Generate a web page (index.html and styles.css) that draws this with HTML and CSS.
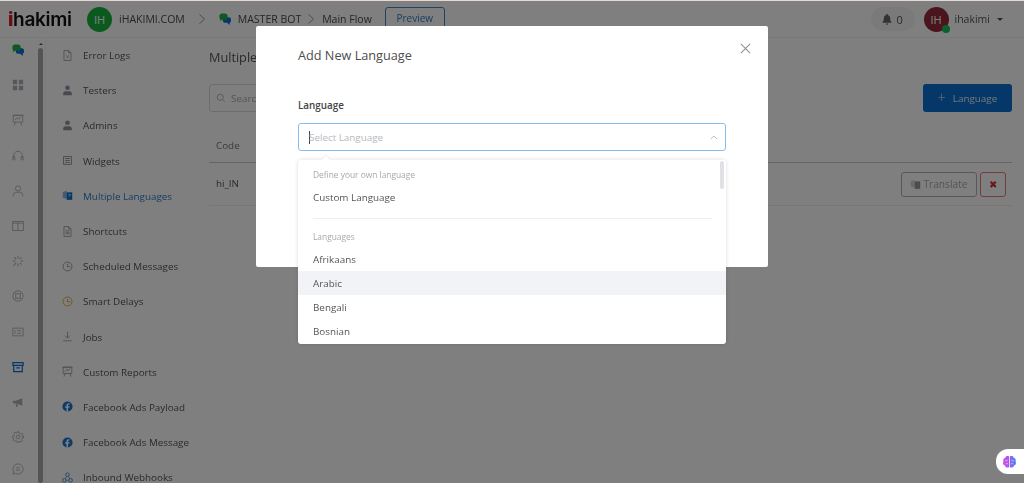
FILE: index.html
```html
<!DOCTYPE html>
<html lang="en">
<head>
<meta charset="utf-8">
<title>Add New Language</title>
<link rel="stylesheet" href="styles.css">
</head>
<body>
<svg class="defs" width="0" height="0" aria-hidden="true">
  <symbol id="bubbles" viewBox="0 0 14 14">
    <path d="M6 5h5.500A2.500 2.500 0 0 1 14 7.500v1.500a2.500 2.500 0 0 1-1.500 2.300V14l-3-2.500H7A2.500 2.500 0 0 1 4.500 9V6.500z" fill="#0b6fd0"/>
    <path d="M3.500 0.500h3.500a3 3 0 0 1 3 3v1.500a3 3 0 0 1-3 3H3.500L1.500 9.500V7.500A3 3 0 0 1 0.500 5V3.500a3 3 0 0 1 3-3z" fill="#1fb04c"/>
  </symbol>
  <symbol id="present" viewBox="0 0 14 14">
    <path d="M1.500 1.500h11v8h-11zM0.500 1.500h13M4 9.500l-1.500 4M10 9.500l1.500 4M3.500 7l2.500-2.500 1.500 1.500L10.500 3.500" fill="none" stroke="currentColor" stroke-width="1"/>
  </symbol>
  <symbol id="person" viewBox="0 0 14 14">
    <circle cx="7" cy="3.500" r="3" fill="currentColor"/>
    <path d="M1.500 13v-2.500A3 3 0 0 1 4.500 7.800h5a3 3 0 0 1 3 2.700V13z" fill="currentColor"/>
  </symbol>
  <symbol id="clock" viewBox="0 0 14 14">
    <circle cx="7" cy="7" r="5.700" fill="none" stroke="currentColor" stroke-width="1.100"/>
    <path d="M7 3.500V7.300h3.200" fill="none" stroke="currentColor" stroke-width="1.100"/>
  </symbol>
  <symbol id="fb" viewBox="0 0 14 14">
    <circle cx="7" cy="7" r="6.500" fill="#1877d2"/>
    <path d="M7.700 13.400V8.700h1.600l.3-1.900H7.700V5.600c0-.6.300-1 1-1h1V3a8 8 0 0 0-1.400-.1c-1.600 0-2.600 1-2.600 2.600v1.300H4v1.900h1.700v4.700z" fill="#fff"/>
  </symbol>
</svg>

<div class="page">
  <header class="topbar">
    <div class="logo"><span class="logo-i">i</span>hakimi</div>
    <span class="avatar avatar-green">IH</span>
    <span class="crumb">iHAKIMI.COM</span>
    <svg class="chev" viewBox="0 0 8 12"><path d="M1.500 1.500 6.500 6l-5 4.500" fill="none" stroke="currentColor" stroke-width="1"/></svg>
    <svg class="bubble-icon" viewBox="0 0 14 14"><use href="#bubbles"/></svg>
    <span class="crumb">MASTER BOT</span>
    <svg class="chev chev-near" viewBox="0 0 8 12"><path d="M1.500 1.500 6.500 6l-5 4.500" fill="none" stroke="currentColor" stroke-width="1"/></svg>
    <span class="crumb">Main Flow</span>
    <span class="preview">Preview</span>
    <span class="spacer"></span>
    <span class="notify">
      <svg viewBox="0 0 12 14"><path d="M6 0.800a1 1 0 0 1 1 1v.4a3.800 3.800 0 0 1 2.800 3.700c0 3 .7 3.900 1.500 4.800v.8H.7v-.8c.8-.9 1.500-1.800 1.500-4.800A3.800 3.800 0 0 1 5 2.200v-.4a1 1 0 0 1 1-1zM4.500 12.300h3a1.500 1.500 0 0 1-3 0z" fill="currentColor"/></svg>
      0
    </span>
    <span class="avatar avatar-red">IH<i class="online"></i></span>
    <span class="user">ihakimi</span>
    <span class="caret"></span>
  </header>

  <div class="workspace">
    <nav class="rail">
      <svg class="rail-icon" viewBox="0 0 14 14"><use href="#bubbles"/></svg>
      <svg class="rail-icon" viewBox="0 0 14 14"><path d="M1 1h5v5H1zM8 1h5v5H8zM1 8h5v5H1zM8 8h5v5H8z" fill="currentColor"/></svg>
      <svg class="rail-icon" viewBox="0 0 14 14"><use href="#present"/></svg>
      <svg class="rail-icon" viewBox="0 0 14 14"><path d="M2 9V6.500a5 5 0 0 1 10 0V9M1 7.500h2.200v4H1zM10.800 7.500H13v4h-2.200z" fill="none" stroke="currentColor"/></svg>
      <svg class="rail-icon" viewBox="0 0 14 14"><circle cx="7" cy="4" r="3" fill="none" stroke="currentColor"/><path d="M1.500 13.500v-1.500a3.500 3.500 0 0 1 3.500-3.500h4a3.500 3.500 0 0 1 3.500 3.500v1.500" fill="none" stroke="currentColor"/></svg>
      <svg class="rail-icon" viewBox="0 0 14 14"><path d="M.7 1.700h12.600v10.600H.7zM7 1.700v10.600M.7 3.700h12.600" fill="none" stroke="currentColor"/></svg>
      <svg class="rail-icon" viewBox="0 0 14 14"><path d="M7 1v3M7 10v3M1 7h3M10 7h3M2.800 2.800l2 2M9.200 9.200l2 2M11.200 2.800l-2 2M4.800 9.200l-3 3.300" fill="none" stroke="currentColor" stroke-width="1.200"/></svg>
      <svg class="rail-icon" viewBox="0 0 14 14"><circle cx="7" cy="7" r="6" fill="none" stroke="currentColor"/><circle cx="7" cy="7" r="3" fill="none" stroke="currentColor"/><path d="M2.800 2.800l2 2M9.200 9.200l2 2M11.200 2.800l-2 2M4.800 9.200l-2 2" stroke="currentColor"/></svg>
      <svg class="rail-icon" viewBox="0 0 14 14"><path d="M1 2.500h12v9H1zM3.500 5v4M6 5.500h4.500M6 8.500h4.500" fill="none" stroke="currentColor"/></svg>
      <svg class="rail-icon rail-active" viewBox="0 0 14 14"><path d="M1 2h12v3H1zM2 5v7.500h10V5M5 8h4" fill="none" stroke="currentColor" stroke-width="1.400"/></svg>
      <svg class="rail-icon" viewBox="0 0 14 14"><path d="M1 5.500h3.500L12 2.500v9L4.500 8.500H1zM4 8.500l1 4h2l-1-3.300" fill="currentColor"/></svg>
      <svg class="rail-icon rail-gear" viewBox="0 0 14 14"><circle cx="7" cy="7" r="2.200" fill="none" stroke="currentColor"/><path d="M6 1h2l.4 1.700 1.500.7 1.500-.9 1.300 1.400-.9 1.500.6 1.500L13.500 6v2l-1.700.4-.6 1.500.9 1.500-1.400 1.400-1.500-.9-1.500.6L8 13.500H6l-.4-1.700-1.500-.6-1.500.9-1.400-1.400.9-1.500-.6-1.500L.5 8V6l1.700-.4.600-1.500-.9-1.500 1.400-1.400 1.500.9 1.500-.7z" fill="none" stroke="currentColor"/></svg>
      <svg class="rail-icon" viewBox="0 0 14 14"><path d="M7 1a6 6 0 1 1-3 11.200L1.200 13l.8-2.800A6 6 0 0 1 7 1zM4.500 5.700h5M4.500 8.300h5" fill="none" stroke="currentColor"/></svg>
    </nav>

    <div class="scrollbar"><span class="scroll-up"></span><span class="scroll-thumb"></span></div>

    <aside class="sidebar">
      <a class="nav-item"><svg viewBox="0 0 14 14"><path d="M2.500.7h6l3 3v9.600h-9zM8.500.7v3h3M5.500 7l3 3M8.500 7l-3 3" fill="none" stroke="currentColor"/></svg>Error Logs</a>
      <a class="nav-item"><svg viewBox="0 0 14 14"><use href="#person"/></svg>Testers</a>
      <a class="nav-item"><svg viewBox="0 0 14 14"><use href="#person"/></svg>Admins</a>
      <a class="nav-item"><svg viewBox="0 0 14 14"><path d="M2 2h10v10H2zM4 4.500h6M4 7h6M4 9.500h6" fill="none" stroke="currentColor" stroke-width="1.200"/></svg>Widgets</a>
      <a class="nav-item nav-active"><svg viewBox="0 0 14 14"><path d="M1 2.500l5-1.500v10l-5-1z" fill="#8ab4e0"/><path d="M6 3h7v9.500H6z" fill="currentColor"/><path d="M8 6h3M9.500 5v1M8.500 9c1.200-.6 2-1.700 2.200-3" stroke="#fff" fill="none" stroke-width=".8"/></svg>Multiple Languages</a>
      <a class="nav-item"><svg viewBox="0 0 14 14"><path d="M2.500.7h6l3 3v9.600h-9zM8.500.7v3h3M4.500 6h5M4.500 8h5M4.500 10h5" fill="none" stroke="currentColor"/></svg>Shortcuts</a>
      <a class="nav-item"><svg viewBox="0 0 14 14"><use href="#clock"/></svg>Scheduled Messages</a>
      <a class="nav-item nav-yellow"><svg viewBox="0 0 14 14"><use href="#clock"/></svg><span>Smart Delays</span></a>
      <a class="nav-item"><svg viewBox="0 0 14 14"><path d="M7 1v8M3.800 6 7 9.200 10.200 6M1.500 12.500h11" fill="none" stroke="currentColor"/></svg>Jobs</a>
      <a class="nav-item"><svg viewBox="0 0 14 14"><use href="#present"/></svg>Custom Reports</a>
      <a class="nav-item"><svg viewBox="0 0 14 14"><use href="#fb"/></svg>Facebook Ads Payload</a>
      <a class="nav-item"><svg viewBox="0 0 14 14"><use href="#fb"/></svg>Facebook Ads Message</a>
      <a class="nav-item nav-hook"><svg viewBox="0 0 14 14"><circle cx="7" cy="3.500" r="2.300" fill="none" stroke="currentColor" stroke-width="1.200"/><circle cx="3" cy="10.500" r="2.300" fill="none" stroke="currentColor" stroke-width="1.200"/><circle cx="11" cy="10.500" r="2.300" fill="none" stroke="currentColor" stroke-width="1.200"/><path d="M6 5.500 4 8.500M8 5.500l2 3M5.300 10.500h3.400" stroke="currentColor" fill="none"/></svg><span>Inbound Webhooks</span></a>
    </aside>

    <main class="content">
      <h1 class="page-title">Multiple Languages</h1>
      <div class="toolbar">
        <div class="search">
          <svg viewBox="0 0 14 14"><circle cx="6" cy="6" r="4.300" fill="none" stroke="currentColor"/><path d="m9.300 9.300 3 3" stroke="currentColor"/></svg>
          Search
        </div>
        <button class="add-btn"><span class="plus">+</span>Language</button>
      </div>
      <div class="table-head">Code</div>
      <div class="table-row">
        <span class="cell-code">hi_IN</span>
        <button class="translate">
          <svg viewBox="0 0 14 14"><path d="M1 2.500l5-1.500v10l-5-1z" fill="#d5d5d5"/><path d="M6 3h7v9.500H6z" fill="currentColor"/></svg>
          Translate
        </button>
        <button class="remove">✖</button>
      </div>
    </main>
  </div>

  <div class="overlay"></div>

  <section class="modal">
    <h2 class="modal-title">Add New Language</h2>
    <svg class="close" viewBox="0 0 12 12"><path d="m1 1 10 10M11 1 1 11" stroke="currentColor" fill="none" stroke-width="1.200"/></svg>
    <label class="field-label">Language</label>
    <div class="select">
      <span class="cursor"></span><span class="placeholder">Select Language</span>
      <svg class="select-arrow" viewBox="0 0 10 6"><path d="m1 5 4-4 4 4" fill="none" stroke="currentColor" stroke-width="1.200"/></svg>
    </div>
    <div class="dropdown">
      <div class="group-title">Define your own language</div>
      <div class="option option-custom">Custom Language</div>
      <hr class="divider">
      <div class="group-title group-second">Languages</div>
      <div class="option">Afrikaans</div>
      <div class="option option-hover">Arabic</div>
      <div class="option">Bengali</div>
      <div class="option">Bosnian</div>
      <span class="dropdown-scroll"></span>
    </div>
  </section>

  <div class="widget">
    <svg viewBox="0 0 16 14">
      <defs><linearGradient id="brain" x1="0" x2="1" y1="0" y2="0"><stop offset="0" stop-color="#e04fd8"/><stop offset=".5" stop-color="#9a5cf0"/><stop offset="1" stop-color="#3f8cf5"/></linearGradient></defs>
      <path d="M7.600 1.200C5.700 0 3.800.9 3.500 2.400 1.700 2.900.8 4.800 1.500 6.400.4 8 1.200 10.200 3.100 10.600c.5 2 3 3 4.500 1.700zM8.400 1.200c1.900-1.200 3.800-.3 4.100 1.200 1.800.5 2.700 2.400 2 4 1.100 1.600.3 3.800-1.600 4.200-.5 2-3 3-4.500 1.700z" fill="url(#brain)"/>
      <path d="M3.500 5.500c1 .3 2 .2 2.800-.5M4 9c.8-.5 1.600-.5 2.400 0M12.500 5.500c-1 .3-2 .2-2.800-.5M12 9c-.8-.5-1.600-.5-2.400 0" fill="none" stroke="#f4d6fb" stroke-width=".7"/>
    </svg>
  </div>
</div>
</body>
</html>
```
FILE: styles.css
```css
* { box-sizing: border-box; }
html, body { margin: 0; height: 100%; overflow: hidden; }
body { font-family: "Open Sans", "Liberation Sans", sans-serif; color: #6f6f6f; background: #fff; }
.defs { position: absolute; }

.page { position: relative; width: 1024px; height: 483px; overflow: hidden; filter: blur(.45px); }

.topbar { height: 38px; display: flex; align-items: center; padding: 1px 0 0 8px; border-bottom: 1px solid #f0f0f0; }
.logo { font-family: "Inter", "Liberation Sans", sans-serif; font-weight: 600; font-size: 19px; letter-spacing: -.3px; color: #111; width: 79px; flex: none; }
.logo-i { color: #d21f26; font-weight: 800; }
.avatar { position: relative; width: 25px; height: 25px; border-radius: 50%; display: flex; align-items: center; justify-content: center; color: #fff; font-size: 11px; flex: none; }
.avatar-green { background: #16b33e; margin-right: 7px; }
.avatar-red { background: #962a3a; margin: 0 6px 0 9px; }
.online { position: absolute; right: -1px; bottom: -1px; width: 8px; height: 8px; border-radius: 50%; background: #14c25a; }
.crumb { font-size: 10.500px; font-weight: 400; color: #4a4a4a; white-space: nowrap; }
.chev { width: 8px; height: 12px; color: #999; margin: 0 13px 0 13px; flex: none; }
.chev-near { margin: 0 7px 0 6px; }
.bubble-icon { width: 12px; height: 12px; margin-right: 7px; flex: none; }
.preview { margin-left: 13px; width: 60px; height: 22px; margin-top: -2px; border: 1px solid #3c87c9; border-radius: 3px; color: #2f7dc4; font-size: 10px; display: flex; align-items: center; justify-content: center; }
.spacer { flex: 1; }
.notify { width: 44px; height: 24px; border-radius: 12px; background: #f5f5f5; display: flex; align-items: center; justify-content: center; gap: 4px; font-size: 11px; color: #555; }
.notify svg { width: 10px; height: 12px; color: #666; }
.user { font-size: 10.500px; color: #555; }
.caret { margin: 0 21px 0 7px; border: 3px solid transparent; border-top-color: #555; border-bottom-width: 0; }

.workspace { display: flex; height: 445px; }
.rail { width: 36px; flex: none; display: flex; flex-direction: column; align-items: center; padding-top: 6px; color: #a8b0b8; }
.rail-icon { width: 12px; height: 12px; flex: none; margin-bottom: 23.200px; }
.rail-gear { margin-bottom: 20px; }
.rail-active { color: #0b6fd0; }
.scrollbar { width: 9px; flex: none; display: flex; flex-direction: column; align-items: center; padding: 5px 2px 0; }
.scroll-up { border: 2.500px solid transparent; border-bottom-color: #555; border-top-width: 0; margin-bottom: 3px; }
.scroll-thumb { width: 5px; flex: 1; background: #a8a8a8; border-radius: 3px; }

.sidebar { width: 164px; flex: none; border-left: 1px solid #f3f3f3; padding: 0 0 0 16px; display: flex; flex-direction: column; margin-top: -.5px; }
.nav-item { height: 35.200px; flex: none; display: flex; align-items: center; gap: 10px; font-size: 9.850px; color: #555; white-space: nowrap; }
.nav-item svg { width: 11px; height: 11px; flex: none; color: #8e96a0; }
.nav-active { color: #2f7dc4; }
.nav-active svg { color: #0b6fd0; }
.nav-yellow svg { color: #e0a52c; }
.nav-hook svg { color: #4d8dd0; }

.content { flex: 1; padding: 10px 12px 0 0; }
.page-title { margin: 0; font-size: 12.700px; font-weight: 500; color: #555; line-height: 19px; }
.toolbar { display: flex; justify-content: space-between; margin-top: 17px; }
.search { width: 170px; height: 28px; border: 1px solid #d5dae0; border-radius: 3px; display: flex; align-items: center; gap: 5px; padding-left: 6px; font-size: 9.850px; color: #aaa; }
.search svg { width: 10px; height: 10px; color: #999; }
.add-btn { width: 89px; height: 28px; border: 0; border-radius: 3px; background: #0b6fd0; color: #e6eefa; font: 9.850px "Open Sans", sans-serif; display: flex; align-items: center; justify-content: center; gap: 7px; padding: 0; }
.plus { font-size: 14px; font-weight: 300; line-height: 1; }
.table-head { height: 51px; border-bottom: 1px solid #c9c9c9; padding: 26px 0 0 7px; font-size: 9.850px; color: #777; line-height: 14px; }
.table-row { height: 43px; border-bottom: 1px solid #eee; display: flex; align-items: center; padding: 0 6px 2px 7px; font-size: 9.850px; color: #555; }
.cell-code { flex: 1; }
.translate { width: 76px; height: 25px; margin-top: 2px; border: 1px solid #aab2bd; border-radius: 3px; background: #fff; color: #aaa; font: 10.200px "Open Sans", sans-serif; display: flex; align-items: center; justify-content: center; gap: 2px; padding: 0; }
.translate svg { width: 11px; height: 11px; color: #999; }
.remove { width: 26px; height: 25px; margin: 2px 0 0 3px; border: 1px solid #e07a80; border-radius: 3px; background: #fff; color: #d32f2f; font-size: 10px; padding: 0; display: flex; align-items: center; justify-content: center; }

.overlay { position: absolute; inset: 1px 0 0; background: rgba(0, 0, 0, .5); }
.page::before { content: ""; position: absolute; left: 0; right: 0; top: 0; height: 1px; background: #e6d8d4; z-index: 1; }

.modal { position: absolute; left: 256px; top: 26px; width: 512px; height: 241px; background: #fff; border-radius: 2px; padding: 19px 42px 0; }
.modal-title { margin: 0; font-size: 12.700px; font-weight: 400; color: #4d4d4d; line-height: 20px; }
.close { position: absolute; right: 17px; top: 17px; width: 11px; height: 11px; color: #909090; }
.field-label { display: block; margin-top: 33px; font-size: 9.850px; font-weight: 600; color: #444; line-height: 14px; }
.select { position: relative; margin-top: 11px; height: 28px; border: 1.500px solid #85bff2; border-radius: 3px; display: flex; align-items: center; padding-left: 10px; font-size: 9.850px; color: #b5b9c0; }
.cursor { width: 1px; height: 13px; background: #444; margin-right: -1px; }
.select-arrow { position: absolute; right: 7px; top: 11px; width: 8px; height: 5px; color: #bbb; }
.dropdown { position: absolute; left: 42px; right: 42px; top: 134px; height: 184px; background: #fff; border-radius: 3px; box-shadow: 0 0 4px rgba(0, 0, 0, .14); padding-top: 8px; font-size: 9.850px; }
.dropdown::before { content: ""; position: absolute; left: 25px; top: -3px; width: 6px; height: 6px; background: #fff; box-shadow: -1px -1px 1px rgba(0, 0, 0, .06); transform: rotate(45deg); }
.group-title { padding-left: 15px; height: 14px; line-height: 14px; font-size: 8.400px; color: #a5a8ad; }
.group-second { margin-top: 11px; margin-bottom: 3px; }
.option { padding-left: 15px; height: 24px; line-height: 24px; color: #555; }
.option-custom { margin-top: 3px; }
.option-hover { background: #f2f3f7; }
.divider { margin: 9px 14px 0 15px; border: 0; border-top: 1px solid #eceef3; }
.dropdown-scroll { position: absolute; right: 2px; top: 1px; width: 4px; height: 28px; border-radius: 2px; background: #dfe1e5; }

.widget { position: absolute; right: 0; top: 449px; width: 28px; height: 25px; background: #fff; border-radius: 12px 0 0 12px; display: flex; align-items: center; padding-left: 6px; }
.widget svg { width: 15px; height: 14px; }
```
